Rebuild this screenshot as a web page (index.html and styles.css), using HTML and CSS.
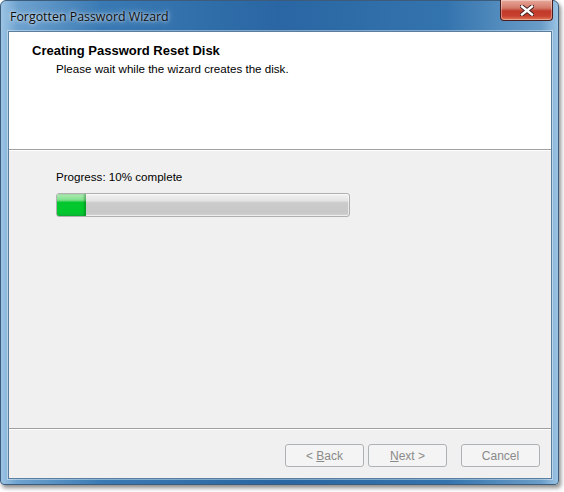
FILE: index.html
```html
<!DOCTYPE html>
<html>
<head>
<meta charset="utf-8">
<link rel="stylesheet" href="styles.css">
</head>
<body>
<div class="window">
  <div class="titlebar">
    <span class="title">Forgotten Password Wizard</span>
    <button class="close" aria-label="Close">
      <svg width="14" height="11" viewBox="0 0 14 11">
        <path d="M2 1.5 L12 9.5 M12 1.5 L2 9.5" stroke="#3a1a1a" stroke-width="4.2" stroke-linecap="square" fill="none"/>
        <path d="M2 1.5 L12 9.5 M12 1.5 L2 9.5" stroke="#ffffff" stroke-width="2.4" stroke-linecap="square" fill="none"/>
      </svg>
    </button>
  </div>
  <div class="client">
    <div class="header">
      <div class="heading">Creating Password Reset Disk</div>
      <div class="subheading">Please wait while the wizard creates the disk.</div>
    </div>
    <div class="content">
      <div class="label">Progress: 10% complete</div>
      <div class="progress"><div class="fill" style="width:10%"></div></div>
    </div>
    <div class="footer">
      <button class="btn" disabled>&lt; <u>B</u>ack</button>
      <button class="btn" disabled><u>N</u>ext &gt;</button>
      <button class="btn cancel" disabled>Cancel</button>
    </div>
  </div>
</div>
</body>
</html>
```

FILE: styles.css
```css
html, body {
  margin: 0;
  padding: 0;
  background: #ffffff;
}
body {
  width: 564px;
  height: 492px;
  overflow: hidden;
  font-family: "Liberation Sans", Arial, sans-serif;
}
.window {
  width: 559px;
  height: 485px;
  box-sizing: border-box;
  border: 1px solid #3c5c7c;
  border-radius: 6px 6px 4px 4px;
  background: linear-gradient(90deg, #9cc4e4 0%, #6ea2cf 3%, #3a7ab4 18%, #2966a3 50%, #3474ae 80%, #6a9dc8 97%, #9cc4e4 100%);
  box-shadow: 2px 3px 4px rgba(0,0,0,0.45);
  padding: 0 6px 5px 7px;
  display: flex;
  flex-direction: column;
}
.titlebar {
  height: 30px;
  display: flex;
  align-items: flex-start;
  flex: none;
}
.title {
  font-family: "Open Sans", "Noto Sans", sans-serif;
  font-size: 12.4px;
  color: #0e0e0e;
  margin: 7px 0 0 2px;
  text-shadow: 0 0 6px rgba(255,255,255,0.8), 0 0 3px rgba(255,255,255,0.7);
}
.close {
  margin-left: auto;
  margin-right: -1px;
  margin-top: -1px;
  width: 53px;
  height: 21px;
  border: 1px solid #4a1c1c;
  border-top: none;
  border-radius: 0 0 4px 4px;
  background: linear-gradient(180deg, #e8a89a 0%, #d47a6a 40%, #c0392a 55%, #c8402e 80%, #e07a5a 100%);
  box-shadow: inset 0 0 0 1px rgba(255,255,255,0.35);
  padding: 0;
  display: flex;
  align-items: center;
  justify-content: center;
}
.client {
  flex: 1;
  background: #f0f0f0;
  border: 1px solid #5a7ea0;
  display: flex;
  flex-direction: column;
  box-shadow: 0 0 0 1px rgba(255,255,255,0.4);
}
.header {
  height: 118px;
  box-sizing: border-box;
  background: #ffffff;
  border-bottom: 1px solid #a0a0a0;
  padding: 11px 0 0 23px;
  flex: none;
}
.heading {
  font-weight: bold;
  font-size: 13px;
  color: #000;
  line-height: 16px;
}
.subheading {
  font-size: 11.6px;
  color: #000;
  line-height: 16px;
  margin: 2px 0 0 24px;
}
.content {
  flex: 1;
  border-top: 1px solid #ffffff;
  padding: 19px 0 0 47px;
}
.label {
  font-size: 11.6px;
  line-height: 14px;
  color: #000;
}
.progress {
  margin-top: 9px;
  width: 292px;
  height: 22px;
  border: 1px solid #b0b0b0;
  border-radius: 3px;
  background: linear-gradient(180deg, #f2f2f2 0%, #e4e4e4 30%, #cbcbcb 40%, #c8c8c8 85%, #d4d4d4 100%);
  box-shadow: inset 0 0 0 1px rgba(255,255,255,0.6);
  overflow: hidden;
}
.fill {
  height: 100%;
  background: linear-gradient(180deg, #b4ecb8 0%, #7be08a 28%, #04c62e 38%, #00c92d 80%, #0cb835 100%);
  box-shadow: inset -2px 0 2px rgba(0,90,20,0.35);
}
.footer {
  height: 50px;
  box-sizing: border-box;
  border-top: 1px solid #a0a0a0;
  box-shadow: inset 0 1px 0 #ffffff;
  display: flex;
  justify-content: flex-end;
  align-items: flex-start;
  padding: 15px 11px 0 0;
  gap: 4px;
  flex: none;
}
.btn {
  width: 79px;
  height: 23px;
  font-family: "Liberation Sans", Arial, sans-serif;
  font-size: 12px;
  color: #8a8a8a;
  background: #f4f4f4;
  border: 1px solid #adb2b5;
  border-radius: 3px;
  padding: 0;
}
.cancel {
  margin-left: 10px;
}
```
